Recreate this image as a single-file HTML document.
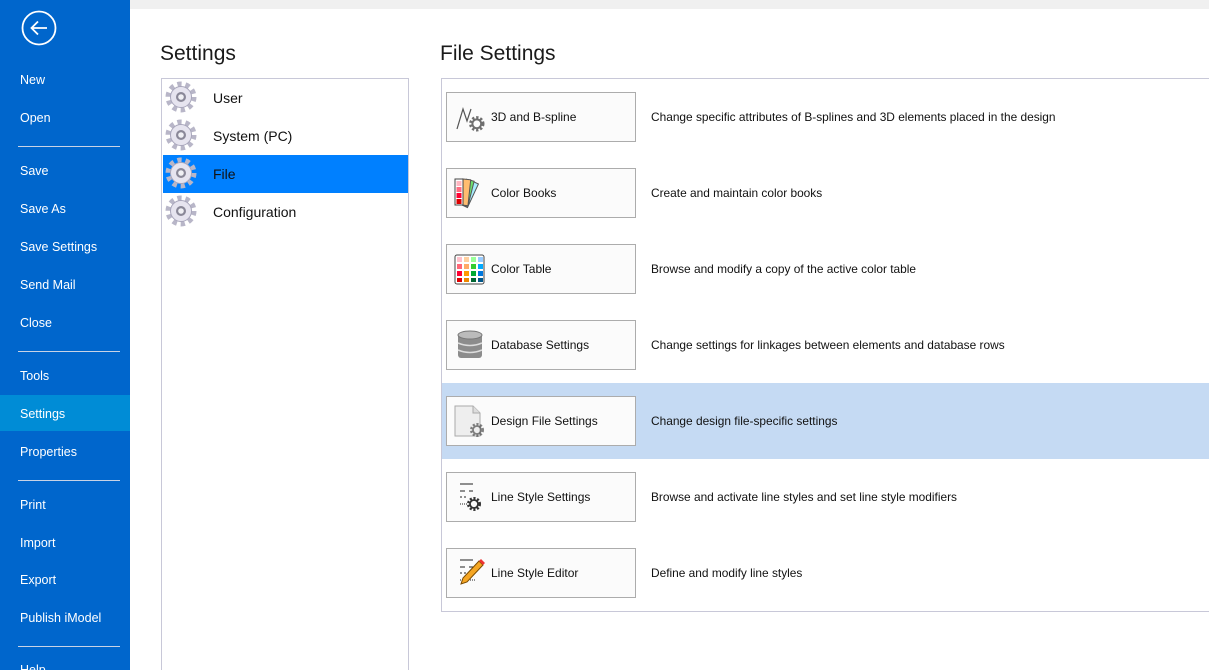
<!DOCTYPE html>
<html><head><meta charset="utf-8"><style>
*{margin:0;padding:0;box-sizing:border-box}
html,body{width:1209px;height:670px;overflow:hidden}
body{background:#fff;font-family:"Segoe UI","Liberation Sans",sans-serif;position:relative}
.side{position:absolute;left:0;top:0;width:130px;height:670px;background:#0066cc}
.side .it{position:absolute;left:20px;color:#fff;font-size:12.5px;line-height:16px}
.side .sep{position:absolute;left:18px;width:102px;height:1px;background:#c8d3e6}
.hl{position:absolute;left:0;top:395px;width:130px;height:36px;background:#008cd6}
.top{position:absolute;left:130px;top:0;width:1079px;height:9px;background:#f0f0f0}
h1{position:absolute;font-weight:normal;font-size:21px;color:#1a1a1a}
.lbox{position:absolute;left:161px;top:78px;width:248px;height:600px;border:1px solid #c8c8d8}
.row{position:absolute;left:1px;width:245px;height:38px}
.row span{position:absolute;left:50px;top:11px;font-size:14px;color:#111}
.row svg{position:absolute;left:2px;top:2px}
.rbox{position:absolute;left:441px;top:78px;width:780px;height:534px;border:1px solid #c8c8d8}
.btn{position:absolute;left:446px;width:190px;height:50px;border:1px solid #acacac;background:#fbfbfb}
.btn span{position:absolute;left:44px;top:17px;font-size:12px;color:#111}
.btn svg{position:absolute;left:7px;top:8px}
.desc{position:absolute;left:651px;font-size:11.9px;color:#111}
</style></head><body>
<div class="top"></div>
<div class="side">
<div class="hl"></div>
<svg style="position:absolute;left:21px;top:10px" width="36" height="36" viewBox="0 0 36 36"><circle cx="18" cy="18" r="16.5" fill="none" stroke="#fff" stroke-width="1.8"/><path d="M26 18H11M17 11.5L10.5 18 17 24.5" fill="none" stroke="#fff" stroke-width="1.8"/></svg>
<div class="it" style="top:72px">New</div>
<div class="it" style="top:110px">Open</div>
<div class="sep" style="top:146px"></div>
<div class="it" style="top:163px">Save</div>
<div class="it" style="top:201px">Save As</div>
<div class="it" style="top:239px">Save Settings</div>
<div class="it" style="top:277px">Send Mail</div>
<div class="it" style="top:315px">Close</div>
<div class="sep" style="top:351px"></div>
<div class="it" style="top:368px">Tools</div>
<div class="it" style="top:406px">Settings</div>
<div class="it" style="top:444px">Properties</div>
<div class="sep" style="top:480px"></div>
<div class="it" style="top:497px">Print</div>
<div class="it" style="top:535px">Import</div>
<div class="it" style="top:572px">Export</div>
<div class="it" style="top:610px">Publish iModel</div>
<div class="sep" style="top:646px"></div>
<div class="it" style="top:662px">Help</div>
</div>

<h1 style="left:160px;top:42px">Settings</h1>
<h1 style="left:440px;top:42px">File Settings</h1>

<svg width="0" height="0" style="position:absolute"><defs>
<g id="gear"><circle cx="16" cy="16" r="13" fill="none" stroke="#b8b6c8" stroke-width="5" stroke-dasharray="4.3 3.87"/><circle cx="16" cy="16" r="10.5" fill="#e6e4ef" stroke="#a8a6bb" stroke-width="1"/><circle cx="16" cy="16" r="5" fill="#8a8898"/><circle cx="16" cy="16" r="2.8" fill="#f0f0f4"/></g>
<g id="sgear"><circle cx="8" cy="8" r="5.5" fill="none" stroke="#333" stroke-width="3" stroke-dasharray="2 1.6"/><circle cx="8" cy="8" r="4" fill="none" stroke="#333" stroke-width="1.8"/></g>
</defs></svg>

<div class="lbox">
<div class="row" style="top:0"><svg width="34" height="34"><use href="#gear"/></svg><span>User</span></div>
<div class="row" style="top:38px"><svg width="34" height="34"><use href="#gear"/></svg><span>System (PC)</span></div>
<div class="row" style="top:76px;background:#0080ff"><svg width="34" height="34"><use href="#gear"/></svg><span>File</span></div>
<div class="row" style="top:114px"><svg width="34" height="34"><use href="#gear"/></svg><span>Configuration</span></div>
</div>

<div class="rbox"><div style="position:absolute;left:0;top:304px;width:780px;height:76px;background:#c5daf3"></div></div>

<div class="btn" style="top:92px"><svg width="34" height="34"><path d="M3 28L9 8 13 20 17 8" fill="none" stroke="#555" stroke-width="1.2"/><use href="#sgear" transform="translate(14,14) scale(1.1)" style="opacity:.7"/></svg><span>3D and B-spline</span></div>
<div class="desc" style="top:110px">Change specific attributes of B-splines and 3D elements placed in the design</div>

<div class="btn" style="top:168px"><svg width="34" height="34"><g transform="rotate(25 8 28)"><rect x="6" y="2" width="8" height="26" fill="#a7ecff" stroke="#555"/></g><g transform="rotate(14 8 28)"><rect x="6" y="2" width="8" height="26" fill="#6ee06e" stroke="#555"/></g><g transform="rotate(6 8 28)"><rect x="6" y="2" width="8" height="26" fill="#ffbd70" stroke="#555"/></g><rect x="1" y="2" width="8" height="26" fill="#fff" stroke="#444"/><rect x="2.5" y="4" width="5" height="5" fill="#ffb6c1"/><rect x="2.5" y="10" width="5" height="5" fill="#ff6b80"/><rect x="2.5" y="16" width="5" height="5" fill="#f03"/><rect x="2.5" y="22" width="5" height="5" fill="#d00"/></svg><span>Color Books</span></div>
<div class="desc" style="top:186px">Create and maintain color books</div>

<div class="btn" style="top:244px"><svg width="34" height="34"><rect x="1" y="2" width="29" height="29" rx="2" fill="#fff" stroke="#444"/><g><rect x="3" y="4" width="5" height="5" fill="#ffc0cb"/><rect x="10" y="4" width="5" height="5" fill="#ffd0a0"/><rect x="17" y="4" width="5" height="5" fill="#9f9"/><rect x="24" y="4" width="5" height="5" fill="#9cf"/><rect x="3" y="11" width="5" height="5" fill="#f67"/><rect x="10" y="11" width="5" height="5" fill="#fa6"/><rect x="17" y="11" width="5" height="5" fill="#3c3"/><rect x="24" y="11" width="5" height="5" fill="#0af"/><rect x="3" y="18" width="5" height="5" fill="#f03"/><rect x="10" y="18" width="5" height="5" fill="#f90"/><rect x="17" y="18" width="5" height="5" fill="#0a3"/><rect x="24" y="18" width="5" height="5" fill="#07d"/><rect x="3" y="25" width="5" height="4" fill="#d00"/><rect x="10" y="25" width="5" height="4" fill="#e80"/><rect x="17" y="25" width="5" height="4" fill="#063"/><rect x="24" y="25" width="5" height="4" fill="#058"/></g></svg><span>Color Table</span></div>
<div class="desc" style="top:262px">Browse and modify a copy of the active color table</div>

<div class="btn" style="top:320px"><svg width="34" height="34"><rect x="4" y="5" width="24" height="24" rx="3" fill="#8c8c8c"/><ellipse cx="16" cy="6" rx="12" ry="4" fill="#bbb" stroke="#777"/><path d="M4 14q12 5 24 0M4 21q12 5 24 0" fill="none" stroke="#ddd" stroke-width="1.5"/></svg><span>Database Settings</span></div>
<div class="desc" style="top:338px">Change settings for linkages between elements and database rows</div>

<div class="btn" style="top:396px"><svg width="34" height="34"><path d="M1 1h18l7 7v23H1z" fill="#eee" stroke="#aaa"/><path d="M19 1v7h7" fill="#ddd" stroke="#aaa"/><use href="#sgear" transform="translate(15,17) scale(1)" style="opacity:.6"/></svg><span>Design File Settings</span></div>
<div class="desc" style="top:414px">Change design file-specific settings</div>

<div class="btn" style="top:472px"><svg width="34" height="34"><path d="M6 3h13M6 10h5M15 10h4M6 16h2M10 16h2" stroke="#222" stroke-width="1"/><path d="M6 23h8" stroke="#222" stroke-dasharray="1 1"/><use href="#sgear" transform="translate(12,15)"/></svg><span>Line Style Settings</span></div>
<div class="desc" style="top:490px">Browse and activate line styles and set line style modifiers</div>

<div class="btn" style="top:548px"><svg width="34" height="34"><path d="M6 3h13M6 10h5M15 10h4M6 16h2M10 16h2" stroke="#222"/><path d="M6 23h16" stroke="#222" stroke-dasharray="1 1"/><path d="M25 4l4 4-16 17-6 2 2-6z" fill="#f5a623" stroke="#7a4a00"/><path d="M25 4l4 4 2-2-4-4z" fill="#e33"/></svg><span>Line Style Editor</span></div>
<div class="desc" style="top:566px">Define and modify line styles</div>
</body></html>
